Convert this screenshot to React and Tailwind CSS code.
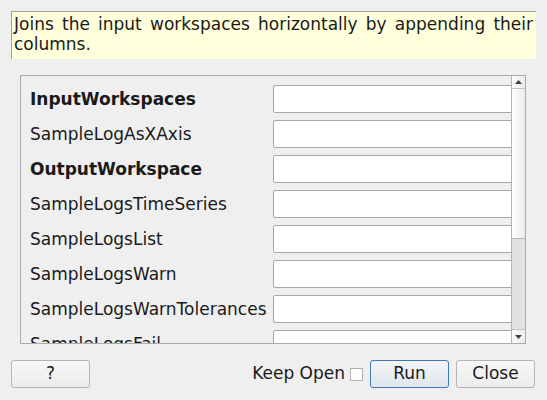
import React from "react";

const rows = [
  { label: "InputWorkspaces", bold: true },
  { label: "SampleLogAsXAxis" },
  { label: "OutputWorkspace", bold: true },
  { label: "SampleLogsTimeSeries" },
  { label: "SampleLogsList" },
  { label: "SampleLogsWarn" },
  { label: "SampleLogsWarnTolerances" },
  { label: "SampleLogsFail" },
];

function Btn({ children, primary, className = "" }) {
  return (
    <div
      className={
        "h-[28px] w-[79px] flex items-center justify-center rounded-[3px] border text-[17px] text-[#1a1a1a] " +
        (primary
          ? "border-[#3f7ab8] bg-gradient-to-b from-[#f3f5f8] to-[#dfe6ee] "
          : "border-[#b4b4b4] bg-gradient-to-b from-[#f8f8f8] to-[#ececec] ") +
        className
      }
    >
      {children}
    </div>
  );
}

export default function App() {
  return (
    <div
      className="w-[547px] h-[400px] bg-[#efefef] overflow-hidden relative"
      style={{ fontFamily: "'DejaVu Sans', sans-serif" }}
    >
      <div className="pt-[11px] pl-[11px] pr-[11px]">
        <div className="h-[48px] bg-[#ffffdc] border-t border-l border-[#a0a0a0] pl-[2px] pr-[3px] pt-[2px] text-[17px] leading-[20px] text-[#1a1a1a] text-justify">
          Joins the input workspaces horizontally by appending their columns.
        </div>
      </div>
      <div className="ml-[20px] mt-[16px] w-[506px] h-[269px] border border-[#ababab] flex">
        <div className="flex-1 min-w-0 overflow-hidden pt-[9px] pl-[9px]">
          <div className="flex flex-col gap-[7px]">
            {rows.map((r) => (
              <div key={r.label} className="flex items-center h-[28px]">
                <div
                  className={
                    "w-[243px] shrink-0 pt-[2px] text-[17px] text-[#1a1a1a] whitespace-nowrap " +
                    (r.bold ? "font-bold" : "")
                  }
                >
                  {r.label}
                </div>
                <div className="w-[250px] h-[28px] shrink-0 bg-white border border-[#a8a8a8] rounded-[2px]" />
              </div>
            ))}
          </div>
        </div>
        <div className="w-[14px] shrink-0 border-l border-[#b4b4b4] flex flex-col">
          <div className="h-[13px] border-b border-[#c4c4c4] bg-gradient-to-r from-[#fafafa] to-[#ececec] flex items-center justify-center">
            <svg width="7" height="4" viewBox="0 0 7 4">
              <path d="M0 4 L3.5 0 L7 4 Z" fill="#404040" />
            </svg>
          </div>
          <div className="h-[150px] border-b border-[#b8b8b8] bg-gradient-to-r from-[#ffffff] to-[#ececec]" />
          <div className="flex-1 bg-[#e2e2e2]" />
          <div className="h-[14px] border-t border-[#c4c4c4] bg-gradient-to-r from-[#fafafa] to-[#ececec] flex items-center justify-center">
            <svg width="7" height="4" viewBox="0 0 7 4">
              <path d="M0 0 L7 0 L3.5 4 Z" fill="#404040" />
            </svg>
          </div>
        </div>
      </div>
      <div className="flex items-center mt-[16px] pl-[11px] pr-[12px]">
        <Btn>?</Btn>
        <div className="flex-1" />
        <span className="text-[17px] text-[#1a1a1a] mr-[5px]">Keep Open</span>
        <div className="w-[13px] h-[13px] bg-white border border-[#b0b0b0] mr-[7px]" />
        <Btn primary>Run</Btn>
        <Btn className="ml-[7px]">Close</Btn>
      </div>
    </div>
  );
}
